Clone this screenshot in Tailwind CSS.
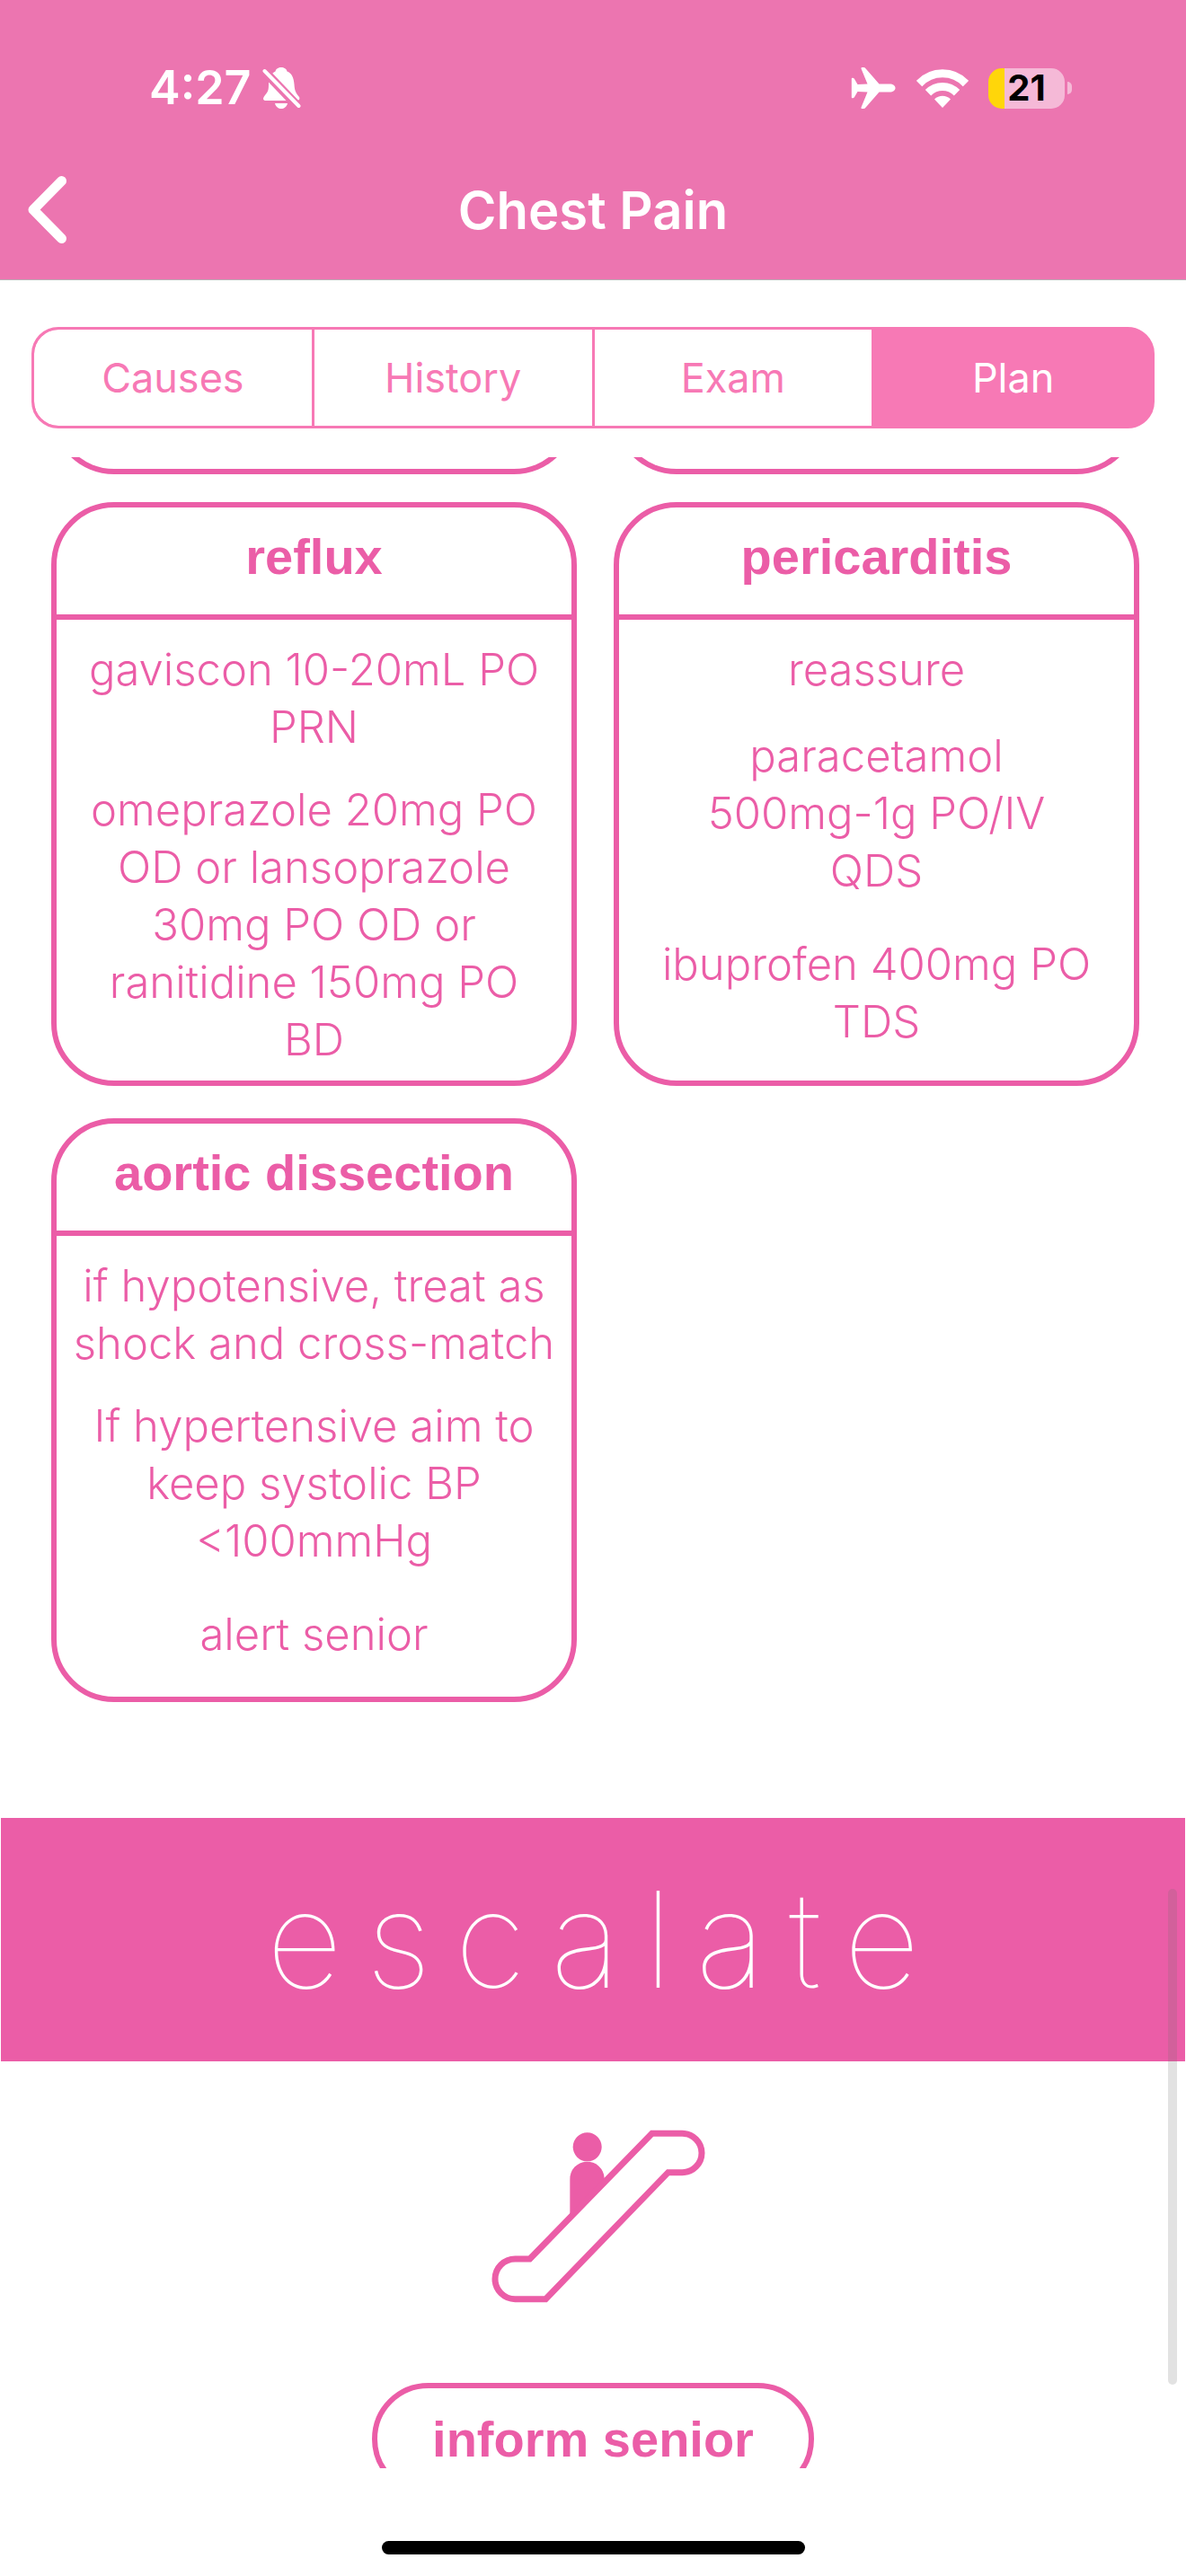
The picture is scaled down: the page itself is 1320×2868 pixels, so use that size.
<!DOCTYPE html>
<html lang="en">
<head>
<meta charset="utf-8">
<meta name="viewport" content="width=device-width, initial-scale=1">
<title>Chest Pain</title>
<script src="https://cdn.jsdelivr.net/npm/@tailwindcss/browser@4"></script>
</head>
<body class="flex h-screen flex-col overflow-hidden bg-white font-['Inter',sans-serif] text-[#eb5da7]">

  <header class="h-[312px] shrink-0 border-b border-[#b9b1b6] bg-[#ec75b0] text-white">
    <!-- Status bar -->
    <div class="flex h-[156px] items-end justify-between pr-[127px] pb-[30px] pl-[166px]">
      <div class="flex h-14 items-center gap-3">
        <span class="text-[52px] leading-[56px] font-semibold">4:27</span>
        <svg class="h-[46px] w-[43px]" viewBox="0 0 43 46" aria-label="Silent mode">
          <g fill="#fff">
            <path d="M21 0c-3 0-6 1.700-6.500 4.500C9.500 7 7 12 7 18c0 7-.5 9-4 13-3 3.500-2.500 6 1 6h34c3 0 4-2 3-4-4-5-5-7-5.500-14C35 11 32.500 6.500 27.500 4.500 27 1.700 24 0 21 0z"/>
            <path d="M14 40h14c-1 4-4 6-7 6s-6-2-7-6z"/>
          </g>
          <path d="M0 2 43 47" stroke="#ec75b0" stroke-width="10"/>
          <path d="M2.500 4 40.500 43" stroke="#fff" stroke-width="4" stroke-linecap="round"/>
        </svg>
      </div>
      <div class="flex h-14 items-center">
        <svg class="mr-[23px] h-[46px] w-[50px]" viewBox="0 0 50 46" fill="#fff" aria-label="Airplane mode">
          <path d="M11.500 1.500Q11 0 12.500 0h1.700q1.300 0 2 1L31.500 18.500H43c4 0 6.500 2 6.500 4.500S47 27.500 43 27.500H31.500L16.200 45q-.7 1-2 1h-1.700q-1.500 0-1-1.500L18.500 27.500 7.500 27 4 33q-.7 1.300-2 1.300H1.500Q.8 34.300.8 33.500V12.500q0-.8.7-.8H2q1.300 0 2 1.300L7.500 19l11-.5z"/>
        </svg>
        <svg class="mr-[22px] h-[43px] w-[58px]" viewBox="0 0 58 43" aria-label="Wi-Fi">
          <g fill="none" stroke="#fff" stroke-width="9">
            <path d="M3 16C17.500 1 40.500 1 55 16"/>
            <path d="M13 26.300c9-9 23-9 32 0"/>
          </g>
          <path d="M29 43 20 33.500c5-5 13-5 18 0z" fill="#fff"/>
        </svg>
        <div class="flex items-center gap-[3px]" aria-label="Battery 21 percent">
          <div class="flex h-[45px] w-[85px] items-center justify-center rounded-[15px] bg-linear-to-r from-[#ffd60a] from-[21%] to-[#f5b9d7] to-[21%]">
            <span class="text-[40px] leading-[44px] font-bold text-black">21</span>
          </div>
          <div class="h-[14px] w-[5px] rounded-r-full bg-[#f5b9d7]"></div>
        </div>
      </div>
    </div>
    <!-- Navigation bar -->
    <div class="grid h-[155px] grid-cols-[1fr_auto_1fr] items-center">
      <button type="button" aria-label="Back" class="ml-[31px] w-[43px]">
        <svg class="h-[75px] w-[43px]" viewBox="0 0 43 75" fill="none" stroke="#fff" stroke-width="11" stroke-linecap="round" stroke-linejoin="round"><path d="M37.500 5.500 6 37.500l31.500 32"/></svg>
      </button>
      <h1 class="text-[58px] leading-[72px] font-semibold">Chest Pain</h1>
    </div>
  </header>

  <nav class="mx-[35px] mt-[52px] grid h-[113px] shrink-0 grid-cols-4 gap-[3px] overflow-hidden rounded-[30px] border-3 border-[#f779b5] bg-[#f779b5] text-[45px] text-[#f779b5]">
    <button type="button" class="rounded-l-[27px] bg-white">Causes</button>
    <button type="button" class="bg-white">History</button>
    <button type="button" class="bg-white">Exam</button>
    <button type="button" class="text-white" aria-current="page">Plan</button>
  </nav>

  <div class="relative mt-8 min-h-0 flex-1">
    <main class="h-full overflow-hidden">
      <div class="grid grid-cols-2 gap-x-[41px] pr-[52px] pl-[57px]">
        <div class="-mt-[131px] h-[150px] rounded-b-[70px] border-6 border-t-0 border-[#eb5da7]"></div>
        <div class="-mt-[131px] h-[150px] rounded-b-[70px] border-6 border-t-0 border-[#eb5da7]"></div>
      </div>

      <div class="mt-[31px] grid auto-rows-[650px] grid-cols-2 gap-x-[41px] gap-y-9 pr-[52px] pl-[57px] text-center text-[49px] leading-[64px] font-light">
        <section class="rounded-[70px] border-6 border-[#eb5da7]">
          <h2 class="h-[125px] border-b-6 border-[#eb5da7] pt-[23px] font-['Liberation_Sans',sans-serif] text-[56px] leading-[64px] font-bold">reflux</h2>
          <p class="mt-6">gaviscon 10-20mL PO<br>PRN</p>
          <p class="mt-7">omeprazole 20mg PO<br>OD or lansoprazole<br>30mg PO OD or<br>ranitidine 150mg PO<br>BD</p>
        </section>
        <section class="rounded-[70px] border-6 border-[#eb5da7]">
          <h2 class="h-[125px] border-b-6 border-[#eb5da7] pt-[23px] font-['Liberation_Sans',sans-serif] text-[56px] leading-[64px] font-bold">pericarditis</h2>
          <p class="mt-6">reassure</p>
          <p class="mt-8">paracetamol<br>500mg-1g PO/IV<br>QDS</p>
          <p class="mt-10">ibuprofen 400mg PO<br>TDS</p>
        </section>
        <section class="rounded-[70px] border-6 border-[#eb5da7]">
          <h2 class="h-[125px] border-b-6 border-[#eb5da7] pt-[23px] font-['Liberation_Sans',sans-serif] text-[56px] leading-[64px] font-bold">aortic dissection</h2>
          <p class="mt-6">if hypotensive, treat as<br>shock and cross-match</p>
          <p class="mt-7">If hypertensive aim to<br>keep systolic BP<br>&lt;100mmHg</p>
          <p class="mt-10">alert senior</p>
        </section>
      </div>

      <section class="mx-px mt-[129px] flex h-[271px] items-center justify-center bg-[#eb5da7]">
        <h2 class="pl-[26px] text-[148px] leading-[180px] font-thin tracking-[26px] text-white">escalate</h2>
      </section>

      <svg class="mx-auto mt-[45px] block h-[250px] w-[290px]" viewBox="0 0 870 750" aria-hidden="true">
        <g transform="translate(15 0)">
          <circle cx="401" cy="151" r="48" fill="#eb5da7"/>
          <path d="M343 385V260a57.500 57.500 0 0 1 115-5v12z" fill="#eb5da7"/>
          <path d="M617 106h101a65 65 0 0 1 0 130h-47L262 659H160a67 67 0 0 1 0-134h49z" fill="#fff" stroke="#eb5da7" stroke-width="21"/>
        </g>
      </svg>

      <button type="button" class="mx-auto mt-[63px] block h-[125px] w-[492px] rounded-full border-6 border-[#eb5da7] font-['Liberation_Sans',sans-serif] text-[56px] leading-[64px] font-bold">inform senior</button>
    </main>
    <div class="absolute top-[1594px] right-[10px] h-[552px] w-[10px] rounded-full bg-[#6c6c6c]/20"></div>
  </div>

  <footer class="flex h-[120px] shrink-0 items-end justify-center pb-6">
    <div class="h-[15px] w-[471px] rounded-full bg-black"></div>
  </footer>
</body>
</html>
